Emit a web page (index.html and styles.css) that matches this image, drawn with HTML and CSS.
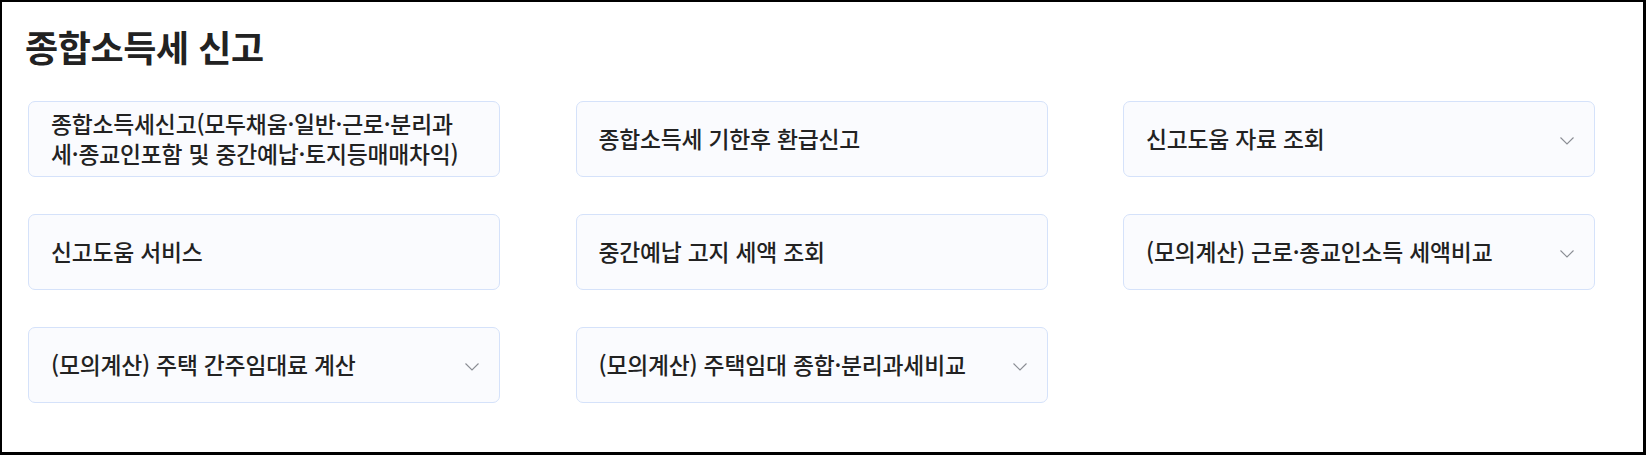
FILE: index.html
```html
<!DOCTYPE html>
<html lang="ko">
<head>
<meta charset="utf-8">
<title>종합소득세 신고</title>
<link rel="stylesheet" href="styles.css">
</head>
<body>
<div class="frame">
  <h2 class="title">종합소득세 신고</h2>
  <div class="grid">
    <a class="card"><span class="label">종합소득세신고(모두채움·일반·근로·분리과세·종교인포함 및 중간예납·토지등매매차익)</span></a>
    <a class="card"><span class="label">종합소득세 기한후 환급신고</span></a>
    <a class="card has-sub"><span class="label">신고도움 자료 조회</span><svg class="chev" viewBox="0 0 14 8" width="14" height="8"><path d="M0.5 0.5 L7 7 L13.5 0.5" fill="none" stroke="#8a8d94" stroke-width="1.1"/></svg></a>
    <a class="card"><span class="label">신고도움 서비스</span></a>
    <a class="card"><span class="label">중간예납 고지 세액 조회</span></a>
    <a class="card has-sub"><span class="label">(모의계산) 근로·종교인소득 세액비교</span><svg class="chev" viewBox="0 0 14 8" width="14" height="8"><path d="M0.5 0.5 L7 7 L13.5 0.5" fill="none" stroke="#8a8d94" stroke-width="1.1"/></svg></a>
    <a class="card has-sub"><span class="label">(모의계산) 주택 간주임대료 계산</span><svg class="chev" viewBox="0 0 14 8" width="14" height="8"><path d="M0.5 0.5 L7 7 L13.5 0.5" fill="none" stroke="#8a8d94" stroke-width="1.1"/></svg></a>
    <a class="card has-sub"><span class="label">(모의계산) 주택임대 종합·분리과세비교</span><svg class="chev" viewBox="0 0 14 8" width="14" height="8"><path d="M0.5 0.5 L7 7 L13.5 0.5" fill="none" stroke="#8a8d94" stroke-width="1.1"/></svg></a>
  </div>
</div>
</body>
</html>
```

FILE: styles.css
```css
html, body {
  margin: 0;
  padding: 0;
  background: #fff;
}
.frame {
  box-sizing: border-box;
  width: 1646px;
  height: 455px;
  border-style: solid;
  border-color: #000;
  border-width: 2px 3px 3px 2px;
  padding: 0 48px 0 26px;
  font-family: "Noto Sans CJK KR", "Noto Sans", sans-serif;
  color: #222;
}
.title {
  margin: 0 0 0 -3px;
  padding: 22px 0 0 0;
  font-size: 36px;
  font-weight: 700;
  line-height: 44px;
  letter-spacing: -0.4px;
  color: #222;
}
.grid {
  margin-top: 33px;
  display: grid;
  grid-template-columns: repeat(3, 472px);
  column-gap: 75.5px;
  row-gap: 37px;
}
.card {
  box-sizing: border-box;
  min-height: 76px;
  display: flex;
  align-items: center;
  justify-content: space-between;
  padding: 7px 34px 7px 22px;
  background: #fafbfe;
  border: 1px solid #d5e2fa;
  border-radius: 7px;
  cursor: pointer;
}
.card.has-sub {
  padding-right: 20px;
}
.label {
  font-size: 22.8px;
  font-weight: 500;
  line-height: 30px;
  letter-spacing: -0.2px;
  color: #222;
}
.chev {
  flex: none;
  margin-left: 16px;
  margin-top: 4px;
}
```
